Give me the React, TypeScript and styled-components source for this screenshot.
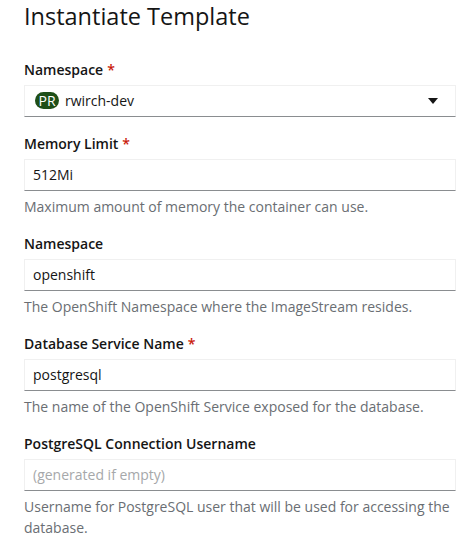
import React from "react";
import styled, { createGlobalStyle } from "styled-components";

const Global = createGlobalStyle`
  html, body { margin: 0; padding: 0; background: #fff; }
  body { font-family: "Open Sans", "Noto Sans", sans-serif; color: #151515; }
  * { box-sizing: border-box; }
`;

const Page = styled.div`
  padding: 0 15px 0 24px;
`;

const Title = styled.h1`
  margin: 0;
  font-size: 23.5px;
  line-height: 32px;
  font-weight: 400;
  color: #151515;
`;

const Form = styled.form`
  margin-top: 26.5px;
  display: flex;
  flex-direction: column;
  gap: 16px;
`;

const Group = styled.div`
  display: flex;
  flex-direction: column;
`;

const Label = styled.label`
  font-size: 14px;
  line-height: 21px;
  font-weight: 600;
  color: #151515;
  margin-bottom: 5px;
`;

const Required = styled.span`
  color: #c9190b;
  margin-left: 4px;
`;

const FieldBox = styled.div`
  height: 32px;
  border: 1px solid #f0f0f0;
  border-bottom-color: #8a8d90;
  display: flex;
  align-items: center;
  padding: 0 8px;
  font-size: 14px;
  color: #151515;
`;

const Input = styled.input`
  height: 32px;
  width: 100%;
  border: 1px solid #f0f0f0;
  border-bottom-color: #8a8d90;
  padding: 0 8px;
  font-family: inherit;
  font-size: 14px;
  color: #151515;
  background: #fff;
  outline: none;
  &::placeholder { color: #a6a8aa; }
`;

const Helper = styled.div`
  margin-top: 5px;
  font-size: 14px;
  line-height: 21px;
  color: #6a6e73;
`;

const Badge = styled.span`
  display: inline-flex;
  align-items: center;
  justify-content: center;
  height: 17px;
  padding: 0 3px;
  min-width: 24px;
  border-radius: 9px;
  background: #1e4f18;
  color: #fff;
  font-size: 14px;
  margin-left: 2px;
  margin-right: 6px;
`;

const SelectText = styled.span`
  flex: 1;
`;

const Caret = styled.svg`
  width: 10px;
  height: 6px;
  margin-right: 9px;
`;

type FieldProps = {
  label: string;
  required?: boolean;
  value?: string;
  placeholder?: string;
  helper?: string;
};

function Field({ label, required, value, placeholder, helper }: FieldProps) {
  return (
    <Group>
      <Label>
        {label}
        {required && <Required>*</Required>}
      </Label>
      <Input defaultValue={value} placeholder={placeholder} />
      {helper && <Helper>{helper}</Helper>}
    </Group>
  );
}

export default function App() {
  return (
    <Page>
      <Global />
      <Title>Instantiate Template</Title>
      <Form onSubmit={(e) => e.preventDefault()}>
        <Group>
          <Label>
            Namespace<Required>*</Required>
          </Label>
          <FieldBox>
            <Badge>PR</Badge>
            <SelectText>rwirch-dev</SelectText>
            <Caret viewBox="0 0 10 6">
              <path d="M0 0 H10 L5 6 Z" fill="#151515" />
            </Caret>
          </FieldBox>
        </Group>
        <Field
          label="Memory Limit"
          required
          value="512Mi"
          helper="Maximum amount of memory the container can use."
        />
        <Field
          label="Namespace"
          value="openshift"
          helper="The OpenShift Namespace where the ImageStream resides."
        />
        <Field
          label="Database Service Name"
          required
          value="postgresql"
          helper="The name of the OpenShift Service exposed for the database."
        />
        <Field
          label="PostgreSQL Connection Username"
          placeholder="(generated if empty)"
          helper="Username for PostgreSQL user that will be used for accessing the database."
        />
      </Form>
    </Page>
  );
}
